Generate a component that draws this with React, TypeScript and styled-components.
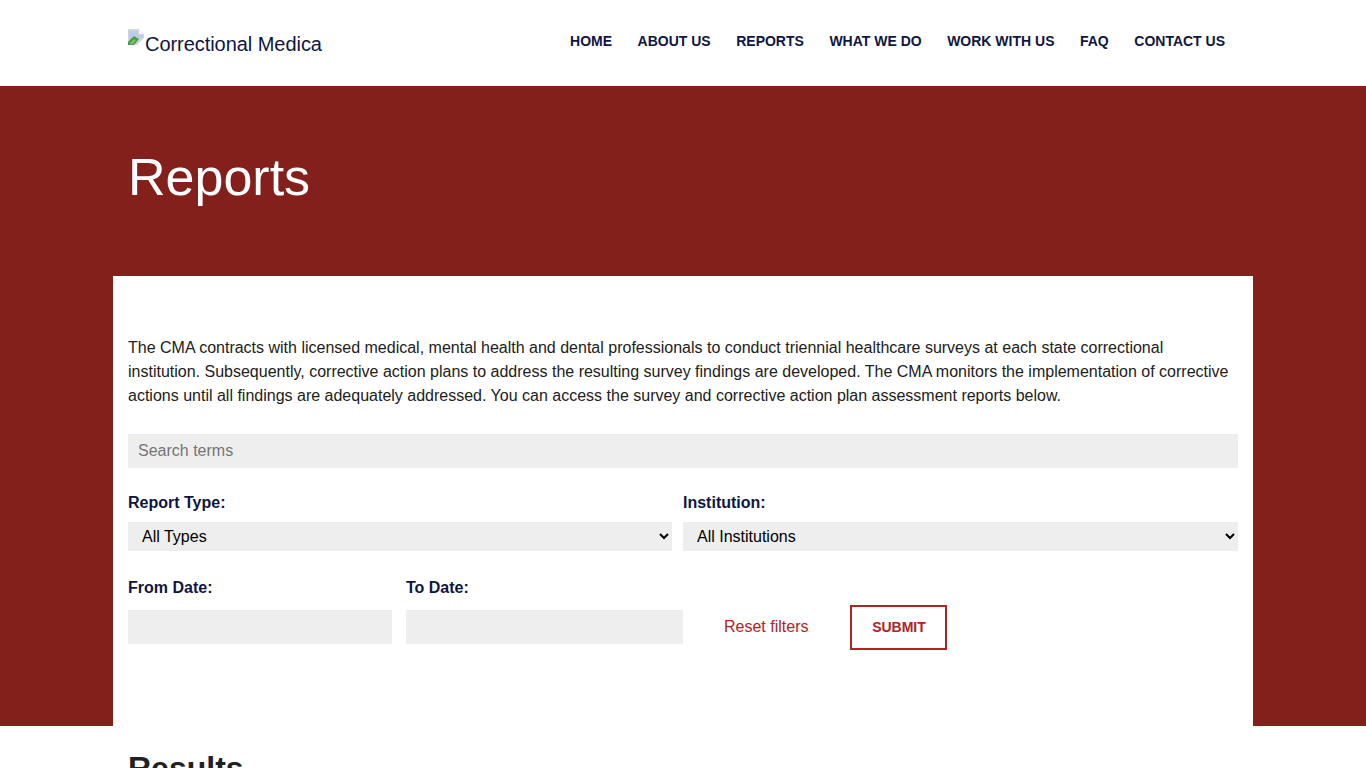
import React from 'react';
import styled, { createGlobalStyle } from 'styled-components';

const GlobalStyle = createGlobalStyle`
  html, body {
    margin: 0;
    padding: 0;
    background: #fff;
    font-family: "Liberation Sans", Arial, sans-serif;
    color: #212121;
  }
  html {
    overflow: hidden;
  }
  * {
    box-sizing: border-box;
  }
`;

const Header = styled.header`
  height: 86px;
  width: 1140px;
  margin: 0 auto;
  padding: 0 15px;
  display: flex;
  align-items: flex-start;
  justify-content: space-between;
`;

const Logo = styled.a`
  display: flex;
  align-items: flex-start;
  margin-top: 29px;
  font-size: 20px;
  line-height: 30px;
  letter-spacing: -0.05px;
  color: #0f1642;
  white-space: nowrap;
`;

const BrokenImage = styled.svg`
  flex: none;
  width: 16px;
  height: 16px;
  margin-right: 1px;
`;

const Nav = styled.nav`
  display: flex;
  gap: 25.5px;
  margin-top: 33px;
  padding-right: 13px;
`;

const NavLink = styled.a`
  font-size: 14px;
  line-height: 16px;
  font-weight: 700;
  color: #0f1642;
  white-space: nowrap;
`;

const Hero = styled.section`
  height: 640px;
  background: #83201b;
`;

const HeroTitle = styled.h1`
  width: 1140px;
  height: 190px;
  margin: 0 auto;
  padding: 61px 15px 0;
  font-size: 52px;
  line-height: 60px;
  font-weight: 400;
  color: #fff;
`;

const Card = styled.div`
  width: 1140px;
  height: 450px;
  margin: 0 auto;
  padding: 60px 15px 0;
  background: #fff;
`;

const Intro = styled.p`
  margin: 0 0 26px;
  font-size: 16px;
  line-height: 24px;
  color: #212121;
`;

const TextInput = styled.input`
  display: block;
  width: 100%;
  height: 34px;
  padding: 0 10px;
  border: 0;
  background: #eee;
  font-family: inherit;
  font-size: 16px;
  color: #333;
  &::placeholder {
    color: #757575;
    opacity: 1;
  }
`;

const SelectRow = styled.div`
  display: grid;
  grid-template-columns: 544px 555px;
  column-gap: 11px;
  margin-top: 25px;
`;

const Label = styled.label`
  display: block;
  font-size: 16px;
  line-height: 20px;
  font-weight: 700;
  color: #0f1642;
`;

const Select = styled.select`
  display: block;
  width: 100%;
  height: 29px;
  margin-top: 9px;
  padding: 0 5px 0 10px;
  border: 0;
  background: #eee;
  font-family: inherit;
  font-size: 16px;
  color: #000;
`;

const DateRow = styled.div`
  display: flex;
  align-items: flex-start;
  margin-top: 27px;
`;

const DateField = styled.div<{ $width: number; $gap: number }>`
  width: ${p => p.$width}px;
  margin-right: ${p => p.$gap}px;
  ${TextInput} {
    margin-top: 12px;
  }
`;

const ResetLink = styled.a`
  margin: 39px 42px 0 41px;
  font-size: 16px;
  line-height: 20px;
  color: #b22222;
  white-space: nowrap;
`;

const SubmitButton = styled.button`
  width: 97px;
  height: 45px;
  margin-top: 27px;
  padding: 0 0 2px;
  border: 2px solid #b22222;
  background: #fff;
  font-family: inherit;
  font-size: 14px;
  font-weight: 700;
  color: #b22222;
`;

const Results = styled.section`
  width: 1140px;
  margin: 0 auto;
  padding: 24px 15px 40px;
`;

const ResultsTitle = styled.h2`
  margin: 0;
  font-size: 32px;
  line-height: 36px;
  font-weight: 700;
  color: #212121;
`;

const navItems = ['HOME', 'ABOUT US', 'REPORTS', 'WHAT WE DO', 'WORK WITH US', 'FAQ', 'CONTACT US'];

function App() {
  return (
    <>
      <GlobalStyle />
      <Header>
        <Logo>
          <BrokenImage viewBox="0 0 16 16">
            <path d="M0 0h11l5 5v4l-7 7H0z" fill="#cfd6e2" />
            <path d="M11 0v5h5z" fill="#f4f4f4" />
            <path d="M1 2h9v4h5v2l-3 2-4-3-7 5z" fill="#bccdea" />
            <path d="M0 13l6-6 5 3-5 6H0z" fill="#4a9a3f" />
            <path d="M2 14l4-4 2 1-3 4H2z" fill="#7cc070" />
          </BrokenImage>
          Correctional Medica
        </Logo>
        <Nav>
          {navItems.map(item => (
            <NavLink key={item}>{item}</NavLink>
          ))}
        </Nav>
      </Header>
      <Hero>
        <HeroTitle>Reports</HeroTitle>
        <Card>
          <Intro>
            The CMA contracts with licensed medical, mental health and dental professionals to conduct triennial
            healthcare surveys at each state correctional institution. Subsequently, corrective action plans to address
            the resulting survey findings are developed. The CMA monitors the implementation of corrective actions until
            all findings are adequately addressed. You can access the survey and corrective action plan assessment
            reports below.
          </Intro>
          <TextInput placeholder="Search terms" />
          <SelectRow>
            <div>
              <Label>Report Type:</Label>
              <Select defaultValue="all">
                <option value="all">All Types</option>
              </Select>
            </div>
            <div>
              <Label>Institution:</Label>
              <Select defaultValue="all">
                <option value="all">All Institutions</option>
              </Select>
            </div>
          </SelectRow>
          <DateRow>
            <DateField $width={264} $gap={14}>
              <Label>From Date:</Label>
              <TextInput />
            </DateField>
            <DateField $width={277} $gap={0}>
              <Label>To Date:</Label>
              <TextInput />
            </DateField>
            <ResetLink>Reset filters</ResetLink>
            <SubmitButton>SUBMIT</SubmitButton>
          </DateRow>
        </Card>
      </Hero>
      <Results>
        <ResultsTitle>Results</ResultsTitle>
      </Results>
    </>
  );
}

export default App;
